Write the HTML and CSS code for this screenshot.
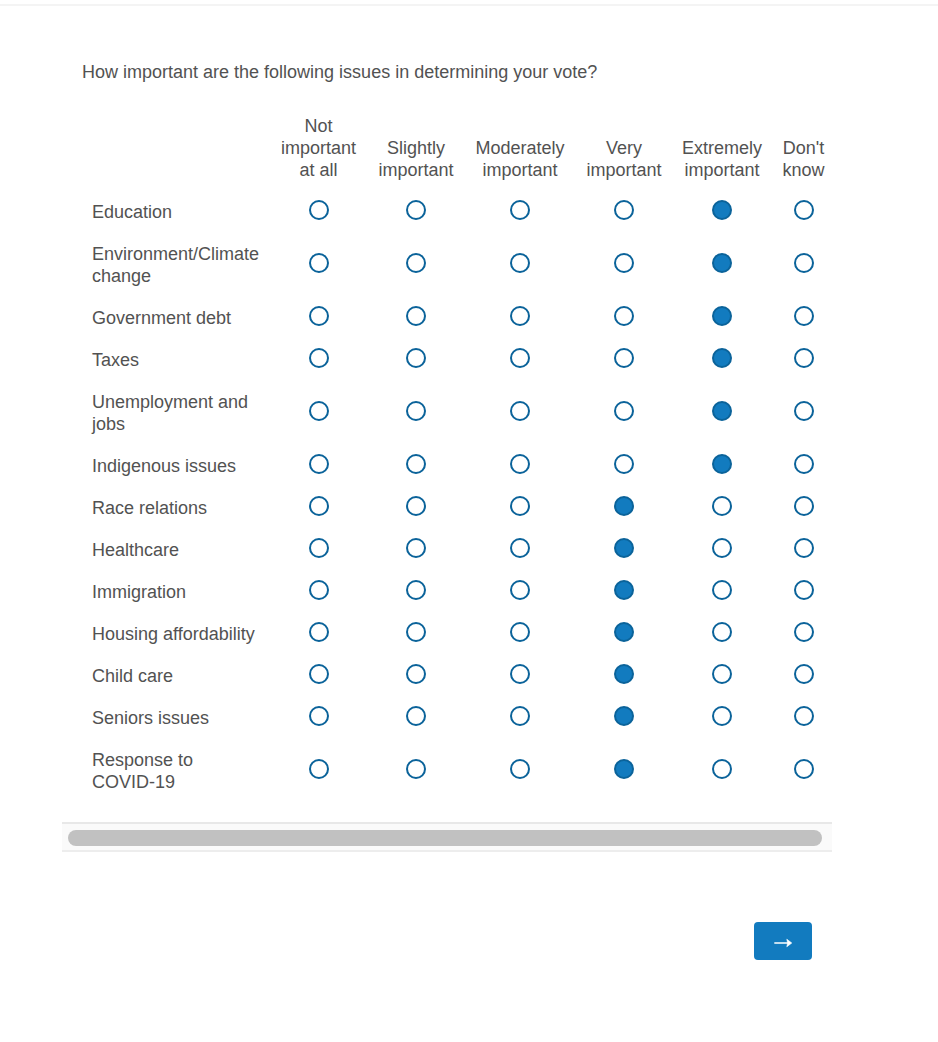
FILE: index.html
```html
<!DOCTYPE html>
<html lang="en">
<head>
<meta charset="utf-8">
<meta name="viewport" content="width=device-width, initial-scale=1">
<title>Survey</title>
<link rel="stylesheet" href="styles.css">
</head>
<body>
<div class="progress"></div>
<main class="survey">
<form class="question">
<h1 class="question-text" id="question">How important are the following issues in determining your vote?</h1>
<div class="matrix-wrap">
<table class="matrix" aria-labelledby="question">
<colgroup>
<col class="col-label"><col class="col-first"><col class="col-mid"><col class="col-wide"><col class="col-mid"><col class="col-mid"><col class="col-narrow">
</colgroup>
<thead>
<tr><td></td><th scope="col">Not important at all</th><th scope="col">Slightly important</th><th scope="col">Moderately important</th><th scope="col">Very important</th><th scope="col">Extremely important</th><th scope="col">Don't know</th></tr>
</thead>
<tbody id="rows"></tbody>
</table>
</div>
<div class="scroll-track"><div class="scroll-thumb"></div></div>
<div class="actions">
<button class="next" type="button" aria-label="Next">
<svg width="18" height="10" viewBox="0 0 18 10" aria-hidden="true"><path d="M0.3 5H15" fill="none" stroke="#fff" stroke-width="1.5"/><path d="M12.8 1.2L17.8 5L12.8 8.8L13.6 5Z" fill="#fff" stroke="#fff" stroke-width=".6" stroke-linejoin="round"/></svg>
</button>
</div>
</form>
</main>
<script src="script.js"></script>
</body>
</html>
```

FILE: styles.css
```css
* {
  box-sizing: border-box;
}

body {
  margin: 0;
  background: #fff;
  color: #525252;
  font: 18px/22px "Liberation Sans", Arial, sans-serif;
}

.progress {
  height: 6px;
  border-bottom: 2px solid #f4f4f4;
}

.survey {
  max-width: 832px;
  padding: 55px 0 40px 62px;
}

.question-text {
  margin: 0;
  padding: 0 20px;
  font-size: 18px;
  font-weight: 400;
}

.matrix-wrap {
  padding: 21px 0 20px 20px;
}

.matrix {
  width: 754px;
  table-layout: fixed;
  border-collapse: collapse;
}

.col-label {
  width: 188px;
}

.col-first {
  width: 97px;
}

.col-mid {
  width: 98px;
}

.col-wide {
  width: 110px;
}

.col-narrow {
  width: 65px;
}

.matrix th,
.matrix td {
  font-weight: 400;
  text-align: center;
}

.matrix thead th {
  padding: 11px 8px 9px;
  vertical-align: bottom;
}

.matrix tbody th {
  padding: 11px 10px 9px;
  text-align: left;
}

.matrix tbody td {
  padding: 0 0 2px;
  vertical-align: middle;
}

.radio {
  appearance: none;
  display: block;
  width: 20px;
  height: 20px;
  margin: 0 auto;
  border: 2px solid #0b639a;
  border-radius: 50%;
  background: #fff;
}

.radio:checked {
  background: #127bbf;
}

.scroll-track {
  padding: 6px 10px 4px 6px;
  border-top: 2px solid #e8e8e8;
  border-bottom: 2px solid #ededed;
  background: #fafafa;
}

.scroll-thumb {
  height: 16px;
  border-radius: 8px;
  background: #c1c1c1;
}

.actions {
  display: flex;
  justify-content: flex-end;
  padding: 70px 20px 0;
}

.next {
  display: flex;
  align-items: center;
  justify-content: center;
  width: 58px;
  height: 38px;
  padding: 4px 0 0;
  border: 0;
  border-radius: 4px;
  background: #127bbf;
}
```

FILE: script.js
```javascript
const choices = ["Not important at all", "Slightly important", "Moderately important", "Very important", "Extremely important", "Don't know"];
const issues = [
  ["Education", 4],
  ["Environment/Climate change", 4],
  ["Government debt", 4],
  ["Taxes", 4],
  ["Unemployment and jobs", 4],
  ["Indigenous issues", 4],
  ["Race relations", 3],
  ["Healthcare", 3],
  ["Immigration", 3],
  ["Housing affordability", 3],
  ["Child care", 3],
  ["Seniors issues", 3],
  ["Response to COVID-19", 3]
];
document.getElementById("rows").innerHTML = issues.map(([name, selected], row) =>
  `<tr><th scope="row">${name}</th>` + choices.map((choice, i) =>
    `<td><input class="radio" type="radio" name="issue-${row}" value="${i}" aria-label="${name}: ${choice}"${i === selected ? " checked" : ""}></td>`
  ).join("") + "</tr>"
).join("");
```
